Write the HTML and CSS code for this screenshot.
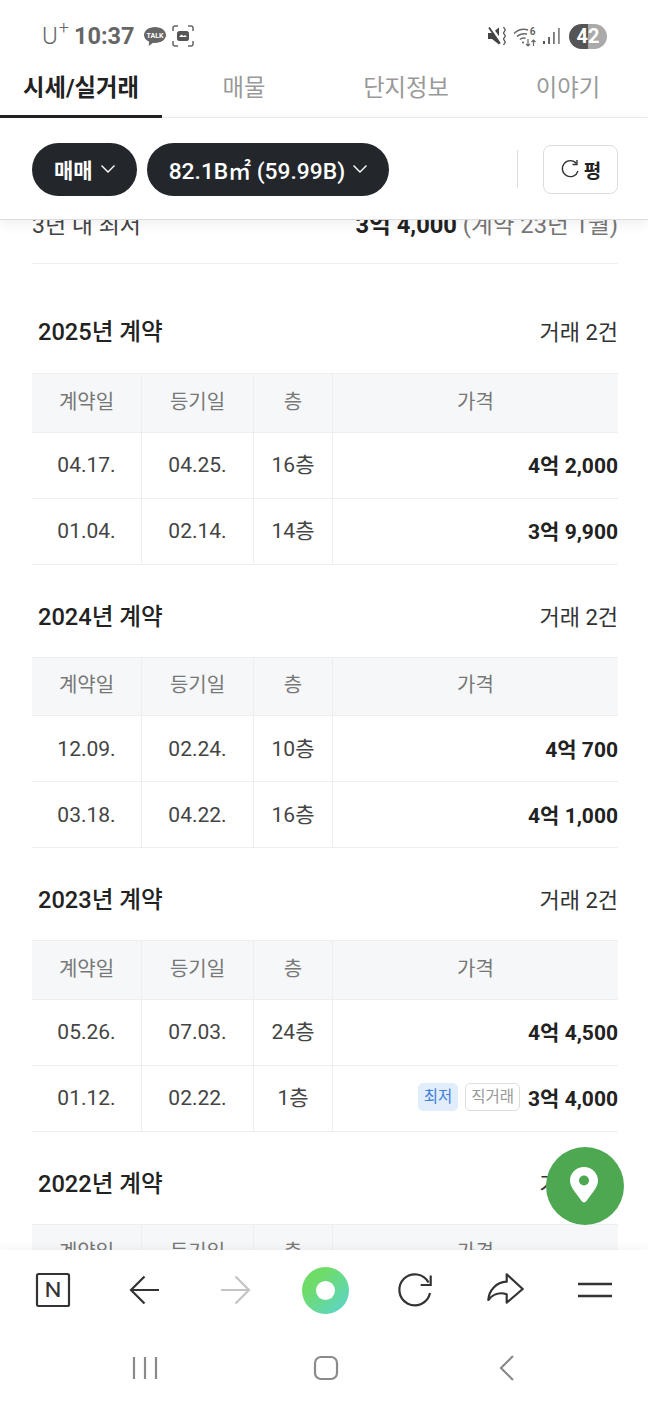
FILE: index.html
```html
<!DOCTYPE html>
<html lang="ko">
<head>
  <meta charset="UTF-8">
  <meta name="viewport" content="width=device-width, initial-scale=1">
  <title>시세/실거래</title>
  <link rel="stylesheet" href="styles.css">
</head>
<body>
  <div class="Page">

    <div class="Status">
      <span class="Status__carrier">U<sup>+</sup></span>
      <span class="Status__time">10:37</span>
      <svg class="Status__talk" width="24" height="24" viewBox="0 0 24 24">
        <path d="M12 3C5.900 3 1 6.600 1 11c0 2.900 2.100 5.400 5.200 6.800L5.600 22l4.600-3.200c.6.100 1.200.200 1.800.200 6.100 0 11-3.600 11-8S18.100 3 12 3z" fill="#666"/>
        <text x="12" y="13.500" text-anchor="middle" font-size="7" font-weight="700" fill="#fff">TALK</text>
      </svg>
      <svg class="Status__capture" width="22" height="22" viewBox="0 0 22 22" fill="none" stroke="#666" stroke-width="1.500">
        <path d="M1 6V3q0-2 2-2h3M16 1h3q2 0 2 2v3M21 16v3q0 2-2 2h-3M6 21H3q-2 0-2-2v-3"/>
        <rect x="5" y="6" width="12" height="10" rx="2.500" fill="#555" stroke="none"/>
        <path d="M7 12l2.500-2.500 2 1.500 1.500-1 2 2z" fill="#fff" stroke="none"/>
      </svg>
      <span class="Status__spacer"></span>
      <svg width="20" height="22" viewBox="0 0 20 22">
        <path d="M1 8h4l7-5.500v17L5 14H1z" fill="#444"/>
        <path d="M3.500 1.500l11 16" stroke="#fff" stroke-width="3"/>
        <path d="M2 2.500l11 16" stroke="#444" stroke-width="1.800"/>
        <path d="M16.500 2l1.800 3-1.800 3 1.800 3-1.800 3 1.800 3-1.800 3" fill="none" stroke="#555" stroke-width="1.300"/>
      </svg>
      <svg class="Status__wifi" width="24" height="22" viewBox="0 0 24 22" fill="none" stroke="#666" stroke-width="1.500">
        <path d="M1 8.500C5 4.800 10.500 3.700 15 5M3.800 11.500C6.800 8.800 10.500 8.200 14 9M6.800 14.500c1.800-1.400 3.800-1.700 5.700-1.200"/>
        <circle cx="10" cy="17.500" r="1.100" fill="#666" stroke="none"/>
        <path d="M15 14v7M13 19l2 2 2-2M20.500 21v-6M18.500 17l2-2 2 2" stroke-width="1.200"/>
        <text x="19.500" y="10" text-anchor="middle" font-size="10" font-weight="700" fill="#666" stroke="none">6</text>
      </svg>
      <svg class="Status__signal" width="17" height="18" viewBox="0 0 17 18">
        <rect x="0" y="14" width="2" height="3" fill="#555"/>
        <rect x="5" y="10" width="2" height="7" fill="#666"/>
        <rect x="10" y="5" width="1.800" height="12" fill="#777"/>
        <rect x="15" y="1" width="1.800" height="16" fill="#888"/>
      </svg>
      <span class="Status__battery">42</span>
    </div>

    <div class="Tabs">
      <a class="Tabs__item is-active">시세/실거래</a>
      <a class="Tabs__item">매물</a>
      <a class="Tabs__item">단지정보</a>
      <a class="Tabs__item">이야기</a>
    </div>

    <div class="Filters">
      <button class="Pill">매매
        <svg width="16" height="10" viewBox="0 0 16 10" fill="none" stroke="#fff" stroke-width="1.400"><path d="M1.500 1.500L8 8l6.500-6.500"/></svg>
      </button>
      <button class="Pill Pill--wide">82.1B㎡ (59.99B)
        <svg width="16" height="10" viewBox="0 0 16 10" fill="none" stroke="#fff" stroke-width="1.400"><path d="M1.500 1.500L8 8l6.500-6.500"/></svg>
      </button>
      <span class="Filters__spacer"></span>
      <span class="Filters__divider"></span>
      <button class="Unit">
        <svg width="20" height="20" viewBox="0 0 20 20" fill="none" stroke="#333" stroke-width="1.400"><path d="M16.500 4.500A8 8 0 1 0 18 12"/><path d="M17 1v4.500h-4.500"/></svg>
        평
      </button>
    </div>

    <div class="Scroll">
      <div class="Summary">
        <span class="Summary__label">3년 내 최저</span>
        <span class="Summary__value"><b>3억 4,000</b> (계약 23년 1월)</span>
      </div>

      <section class="Year">
        <div class="Year__head"><h2>2025년 계약</h2><span>거래 2건</span></div>
        <div class="Row Row--head"><div>계약일</div><div>등기일</div><div>층</div><div>가격</div></div>
        <div class="Row"><div>04.17.</div><div>04.25.</div><div>16층</div><div class="Row__price"><b>4억 2,000</b></div></div>
        <div class="Row"><div>01.04.</div><div>02.14.</div><div>14층</div><div class="Row__price"><b>3억 9,900</b></div></div>
      </section>

      <section class="Year">
        <div class="Year__head"><h2>2024년 계약</h2><span>거래 2건</span></div>
        <div class="Row Row--head"><div>계약일</div><div>등기일</div><div>층</div><div>가격</div></div>
        <div class="Row"><div>12.09.</div><div>02.24.</div><div>10층</div><div class="Row__price"><b>4억 700</b></div></div>
        <div class="Row"><div>03.18.</div><div>04.22.</div><div>16층</div><div class="Row__price"><b>4억 1,000</b></div></div>
      </section>

      <section class="Year">
        <div class="Year__head"><h2>2023년 계약</h2><span>거래 2건</span></div>
        <div class="Row Row--head"><div>계약일</div><div>등기일</div><div>층</div><div>가격</div></div>
        <div class="Row"><div>05.26.</div><div>07.03.</div><div>24층</div><div class="Row__price"><b>4억 4,500</b></div></div>
        <div class="Row"><div>01.12.</div><div>02.22.</div><div>1층</div><div class="Row__price"><span class="Tag Tag--low">최저</span><span class="Tag">직거래</span><b>3억 4,000</b></div></div>
      </section>

      <section class="Year">
        <div class="Year__head"><h2>2022년 계약</h2><span>거래 2건</span></div>
        <div class="Row Row--head"><div>계약일</div><div>등기일</div><div>층</div><div>가격</div></div>
      </section>

      <button class="Fab">
        <svg width="28" height="36" viewBox="0 0 28 36"><path fill-rule="evenodd" d="M14 0C6.300 0 0 6 0 13.500c0 3.500 1.500 6.500 3.500 9.500L12 34.500c1 1.300 3 1.300 4 0L24.500 23c2-3 3.500-6 3.500-9.500C28 6 21.700 0 14 0zm0 18.500a5 5 0 1 1 0-10 5 5 0 0 1 0 10z" fill="#fff"/></svg>
      </button>
    </div>

    <div class="Toolbar">
      <div class="Toolbar__item Toolbar__item--first">
        <svg width="36" height="36" viewBox="0 0 36 36" fill="none" stroke="#333"><rect x="2" y="2" width="32" height="32" rx="1.500" stroke-width="2.200"/><text x="18" y="25" text-anchor="middle" font-size="20" font-weight="400" fill="#333" stroke="none" textLength="17" lengthAdjust="spacingAndGlyphs">N</text></svg>
      </div>
      <div class="Toolbar__item">
        <svg width="32" height="30" viewBox="0 0 32 30" fill="none" stroke="#333" stroke-width="2.200"><path d="M30 15H2M15.500 1.500L2 15l13.500 13.500"/></svg>
      </div>
      <div class="Toolbar__item">
        <svg width="32" height="30" viewBox="0 0 32 30" fill="none" stroke="#c4c4c4" stroke-width="2.200"><path d="M2 15h28M16.500 1.500L30 15 16.500 28.500"/></svg>
      </div>
      <div class="Toolbar__item">
        <span class="Toolbar__ring"></span>
      </div>
      <div class="Toolbar__item">
        <svg width="40" height="40" viewBox="0 0 40 40" fill="none" stroke="#333" stroke-width="2.200"><path d="M33.500 12.500A15.500 15.500 0 1 0 35 23"/><path d="M35.700 5.500V15h-10"/></svg>
      </div>
      <div class="Toolbar__item">
        <svg width="40" height="40" viewBox="0 0 40 40" fill="none" stroke="#333" stroke-width="2.200" stroke-linejoin="round"><path d="M37.700 19L21.700 4.300v7.400C11 12.500 4 20 3.300 30c4.700-6 11.700-8 18.400-5.700v8.400z"/></svg>
      </div>
      <div class="Toolbar__item">
        <svg width="36" height="16" viewBox="0 0 36 16" stroke="#333" stroke-width="2.400"><path d="M1 2h34M1 14h34"/></svg>
      </div>
    </div>

    <div class="Nav">
      <div class="Nav__item">
        <svg width="26" height="24" viewBox="0 0 26 24" stroke="#8a8a8a" stroke-width="2.200"><path d="M2 1v22M13 1v22M24 1v22"/></svg>
      </div>
      <div class="Nav__item">
        <svg width="26" height="26" viewBox="0 0 26 26" fill="none" stroke="#8a8a8a" stroke-width="2.200"><rect x="2" y="2" width="22" height="22" rx="6"/></svg>
      </div>
      <div class="Nav__item">
        <svg width="18" height="28" viewBox="0 0 18 28" fill="none" stroke="#8a8a8a" stroke-width="2.200"><path d="M15 2L3 14l12 12"/></svg>
      </div>
    </div>

  </div>
</body>
</html>
```

FILE: styles.css
```css
*,
*::before,
*::after {
  box-sizing: border-box;
}
html, body {
  width: 100%;
  height: 100%;
  margin: 0;
  padding: 0;
}
body {
  background-color: #fff;
  color: #222;
  font-family: Roboto, "Noto Sans CJK KR", sans-serif;
}
button {
  font-family: inherit;
  cursor: pointer;
}

.Page {
  display: flex;
  flex-direction: column;
  height: 1404px;
  overflow: hidden;
}

.Status {
  display: flex;
  flex: none;
  align-items: center;
  height: 64px;
  padding: 8px 41px 0 42px;
  color: #666;
}
.Status__carrier {
  width: 32px;
  font-size: 24px;
  font-weight: 300;
  line-height: 1;
}
.Status__carrier sup {
  position: relative;
  top: -1px;
  left: 1px;
  font-size: 18px;
  line-height: 0;
  vertical-align: super;
}
.Status__time {
  font-size: 23.500px;
  font-weight: 700;
}
.Status__talk {
  margin-left: 8px;
}
.Status__capture {
  margin-left: 5px;
}
.Status__spacer {
  flex: 1;
}
.Status__wifi {
  margin-left: 6px;
}
.Status__signal {
  margin-left: 6px;
}
.Status__battery {
  width: 38px;
  height: 25px;
  margin-left: 9px;
  border-radius: 13px;
  background: linear-gradient(90deg, #555 50%, #aaa 50%);
  color: #fff;
  font-size: 20px;
  font-weight: 700;
  line-height: 25px;
  text-align: center;
}

.Tabs {
  display: grid;
  flex: none;
  grid-template-columns: repeat(4, 162px);
  height: 54px;
  border-bottom: 1px solid #eee;
}
.Tabs__item {
  height: 54px;
  padding: 4px 0 0 2px;
  color: #999;
  font-size: 23.300px;
  line-height: 40px;
  text-align: center;
}
.Tabs__item.is-active {
  padding-left: 0;
  border-bottom: 3px solid #222;
  color: #222;
  font-weight: 700;
}

.Filters {
  position: relative;
  z-index: 2;
  display: flex;
  flex: none;
  align-items: center;
  height: 102px;
  padding: 1px 30px 0 32px;
  border-bottom: 1px solid #ddd;
  background-color: #fff;
  box-shadow: 0 3px 14px rgba(0,0,0,.07);
}
.Filters__spacer {
  flex: 1;
}
.Filters__divider {
  width: 1px;
  height: 38px;
  margin-right: 25px;
  background-color: #ddd;
}
.Pill {
  display: flex;
  align-items: center;
  gap: 7px;
  height: 53px;
  padding: 0 21px 0 22px;
  border: 0;
  border-radius: 27px;
  background-color: #23272c;
  color: #fff;
  font-size: 21px;
  font-weight: 700;
}
.Pill--wide {
  margin-left: 10px;
  font-size: 22.800px;
  font-weight: 500;
}
.Unit {
  display: flex;
  align-items: center;
  justify-content: center;
  gap: 4px;
  width: 75px;
  height: 49px;
  border: 1px solid #ddd;
  border-radius: 8px;
  background-color: #fff;
  color: #222;
  font-size: 19px;
  font-weight: 700;
}

.Scroll {
  position: relative;
  flex: 1;
  min-height: 0;
  padding: 0 30px 0 32px;
  overflow: hidden;
}
.Summary {
  display: flex;
  align-items: center;
  justify-content: space-between;
  height: 80px;
  margin-top: -36px;
  padding-bottom: 2px;
  border-bottom: 1px solid #eee;
  color: #777;
  font-size: 23.700px;
}
.Summary__label {
  color: #444;
  font-size: 23px;
}
.Summary__value b {
  color: #222;
}

.Year {
  padding-top: 35px;
}
.Year:first-of-type {
  padding-top: 51px;
}
.Year__head {
  display: flex;
  align-items: center;
  justify-content: space-between;
  height: 30px;
  margin-bottom: 27px;
  padding-left: 6px;
  font-size: 22px;
  color: #333;
}
.Year:first-of-type .Year__head {
  margin-bottom: 28px;
}
.Year__head h2 {
  margin: 0;
  color: #222;
  font-size: 23.600px;
  font-weight: 500;
}

.Row {
  display: grid;
  grid-template-columns: 110px 112px 79px 1fr;
  height: 66px;
  border-bottom: 1px solid #eee;
  color: #444;
  font-size: 21px;
  line-height: 30px;
}
.Row > div {
  display: flex;
  align-items: center;
  justify-content: center;
  border-right: 1px solid #eee;
}
.Row > div:last-child {
  border-right: 0;
}
.Row--head {
  height: 59.500px;
  border-top: 1px solid #eee;
  background-color: #f6f7f9;
  color: #777;
  font-size: 20px;
}
.Row--head > div {
  padding-bottom: 2px;
}
.Row > .Row__price {
  justify-content: flex-end;
  padding-top: 2px;
  color: #222;
}
.Tag {
  height: 28px;
  margin: 0 8px 4px 0;
  padding: 0 5px;
  border: 1px solid #ddd;
  border-radius: 5px;
  color: #999;
  font-size: 15.500px;
  line-height: 26px;
}
.Tag--low {
  margin-right: 7px;
  border-color: #e1edfb;
  background-color: #e1edfb;
  color: #3f7fd8;
}

.Fab {
  position: absolute;
  top: 927px;
  left: 546px;
  display: flex;
  align-items: center;
  justify-content: center;
  width: 78px;
  height: 78px;
  padding: 0 2px 2px 0;
  border: 0;
  border-radius: 50%;
  background-color: #4ea852;
}

.Toolbar {
  position: relative;
  z-index: 2;
  display: grid;
  flex: none;
  grid-template-columns: repeat(7, 90px);
  height: 80px;
  padding-left: 10px;
  background-color: #fff;
  box-shadow: 0 -4px 6px rgba(0,0,0,.03);
}
.Toolbar__item {
  display: flex;
  align-items: center;
  justify-content: center;
}
.Toolbar__item--first {
  padding-right: 4px;
}
.Toolbar__ring {
  width: 47px;
  height: 47px;
  border: 14px solid transparent;
  border-radius: 50%;
  background: linear-gradient(#fff, #fff) padding-box, linear-gradient(135deg, #6fdc6a 30%, #5dd5c5 90%) border-box;
}

.Nav {
  display: grid;
  flex: none;
  grid-template-columns: repeat(3, 181px);
  height: 74px;
  padding: 2px 0 0 54px;
  background-color: #fff;
}
.Nav__item {
  display: flex;
  align-items: center;
  justify-content: center;
}
```
